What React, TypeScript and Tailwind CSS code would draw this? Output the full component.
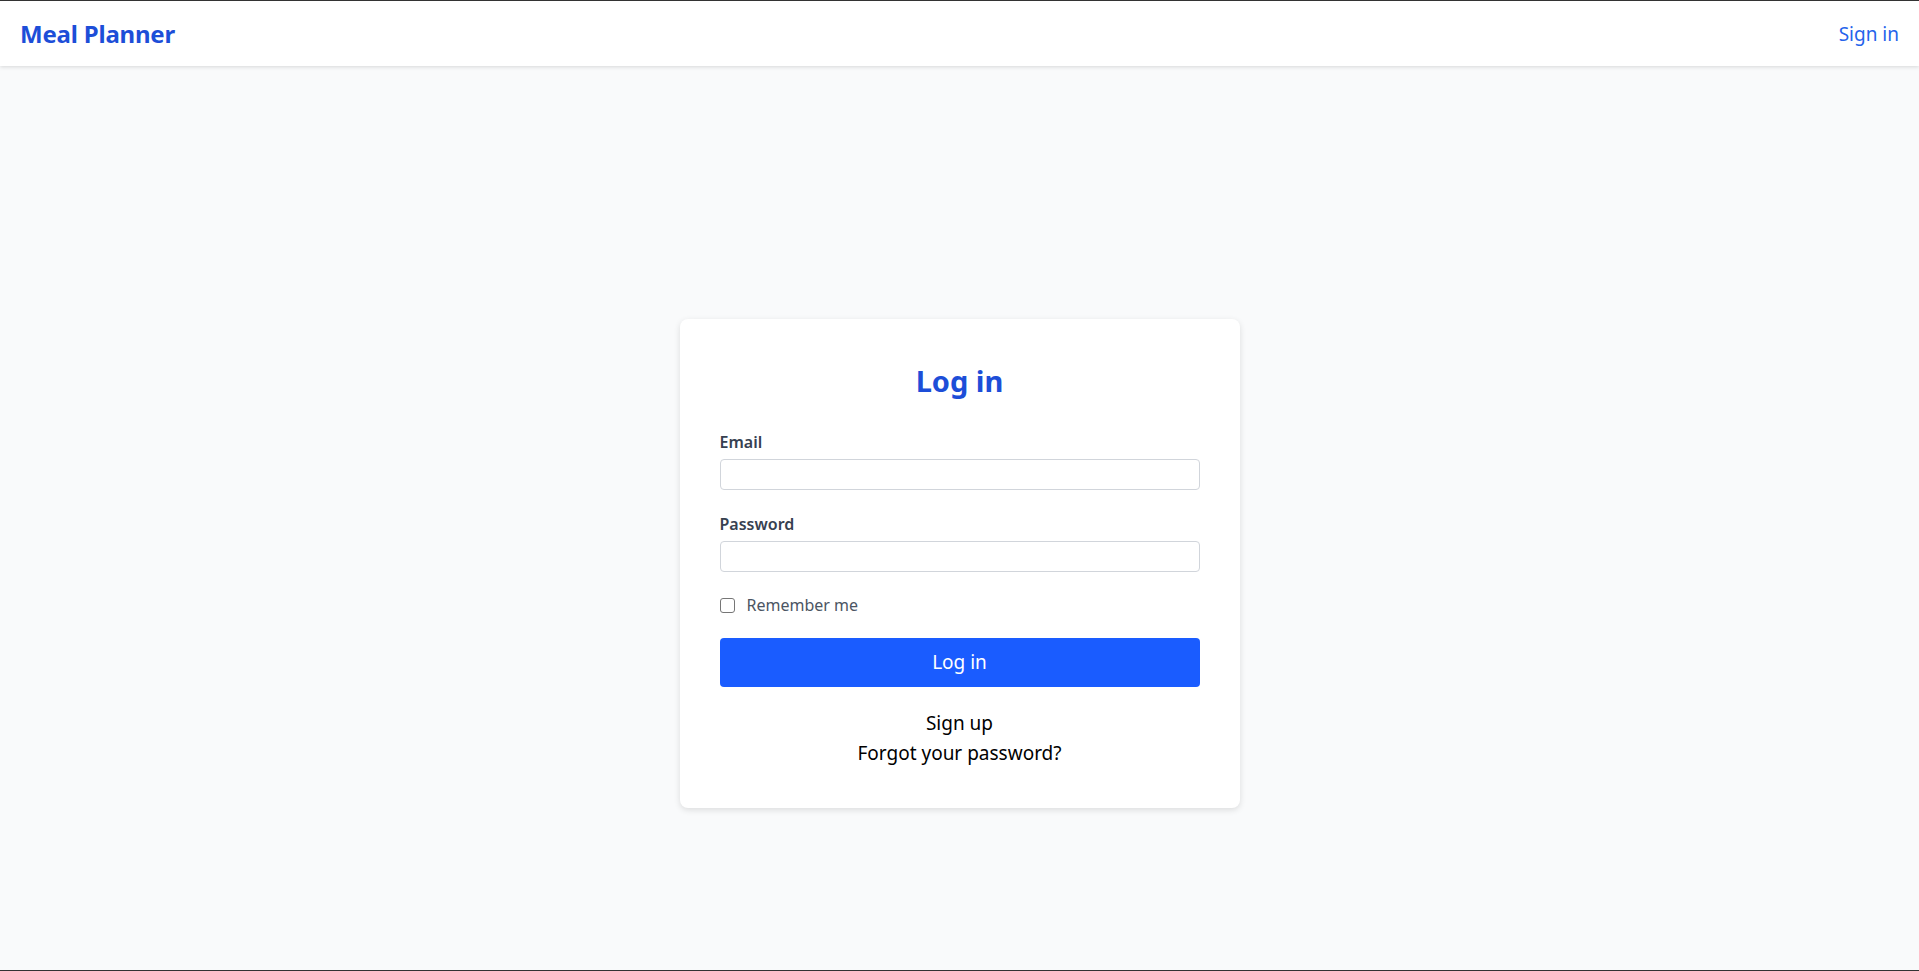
import React from "react";

export default function App() {
  return (
    <div
      className="h-[971px] flex flex-col bg-[#f9fafb] border-t border-b border-[#333] overflow-hidden"
      style={{ fontFamily: '"Noto Sans", "Open Sans", sans-serif' }}
    >
      <header className="h-[65px] bg-white shadow-[0_1px_4px_rgba(0,0,0,0.14)] flex items-center justify-between pl-[20px] pr-[20px] shrink-0 relative z-10">
        <div className="text-[24px] font-bold text-[#1d4ed8] tracking-[-0.2px]">Meal Planner</div>
        <a className="text-[19px] text-[#2563eb] mt-[2px]">Sign in</a>
      </header>
      <main className="flex-1 flex justify-center pt-[253px]">
        <div className="w-[560px] h-[489px] bg-white rounded-[8px] shadow-[0_2px_6px_rgba(0,0,0,0.12)] px-[40px] pt-[42px]">
          <h1 className="text-[29px] font-bold text-[#1d4ed8] text-center leading-[40px]">Log in</h1>
          <div className="mt-[30px]">
            <label className="block text-[16px] font-semibold text-[#374151] leading-[22px]">Email</label>
            <input className="mt-[6px] block w-full h-[31px] border border-[#d1d5db] rounded-[4px] bg-white" />
          </div>
          <div className="mt-[23px]">
            <label className="block text-[16px] font-semibold text-[#374151] leading-[22px]">Password</label>
            <input
              type="password"
              className="mt-[6px] block w-full h-[31px] border border-[#d1d5db] rounded-[4px] bg-white"
            />
          </div>
          <div className="mt-[22px] flex items-center">
            <span className="w-[15px] h-[15px] border-[1.5px] border-[#767676] rounded-[3px] inline-block" />
            <span className="ml-[12px] text-[16px] text-[#4b5563] leading-[22px]">Remember me</span>
          </div>
          <button className="mt-[22px] block w-full h-[49px] bg-[#1a5cff] text-white text-[19px] rounded-[4px]">
            Log in
          </button>
          <div className="mt-[21px] flex flex-col items-center text-[19px] text-black leading-[30px]">
            <a>Sign up</a>
            <a>Forgot your password?</a>
          </div>
        </div>
      </main>
    </div>
  );
}
